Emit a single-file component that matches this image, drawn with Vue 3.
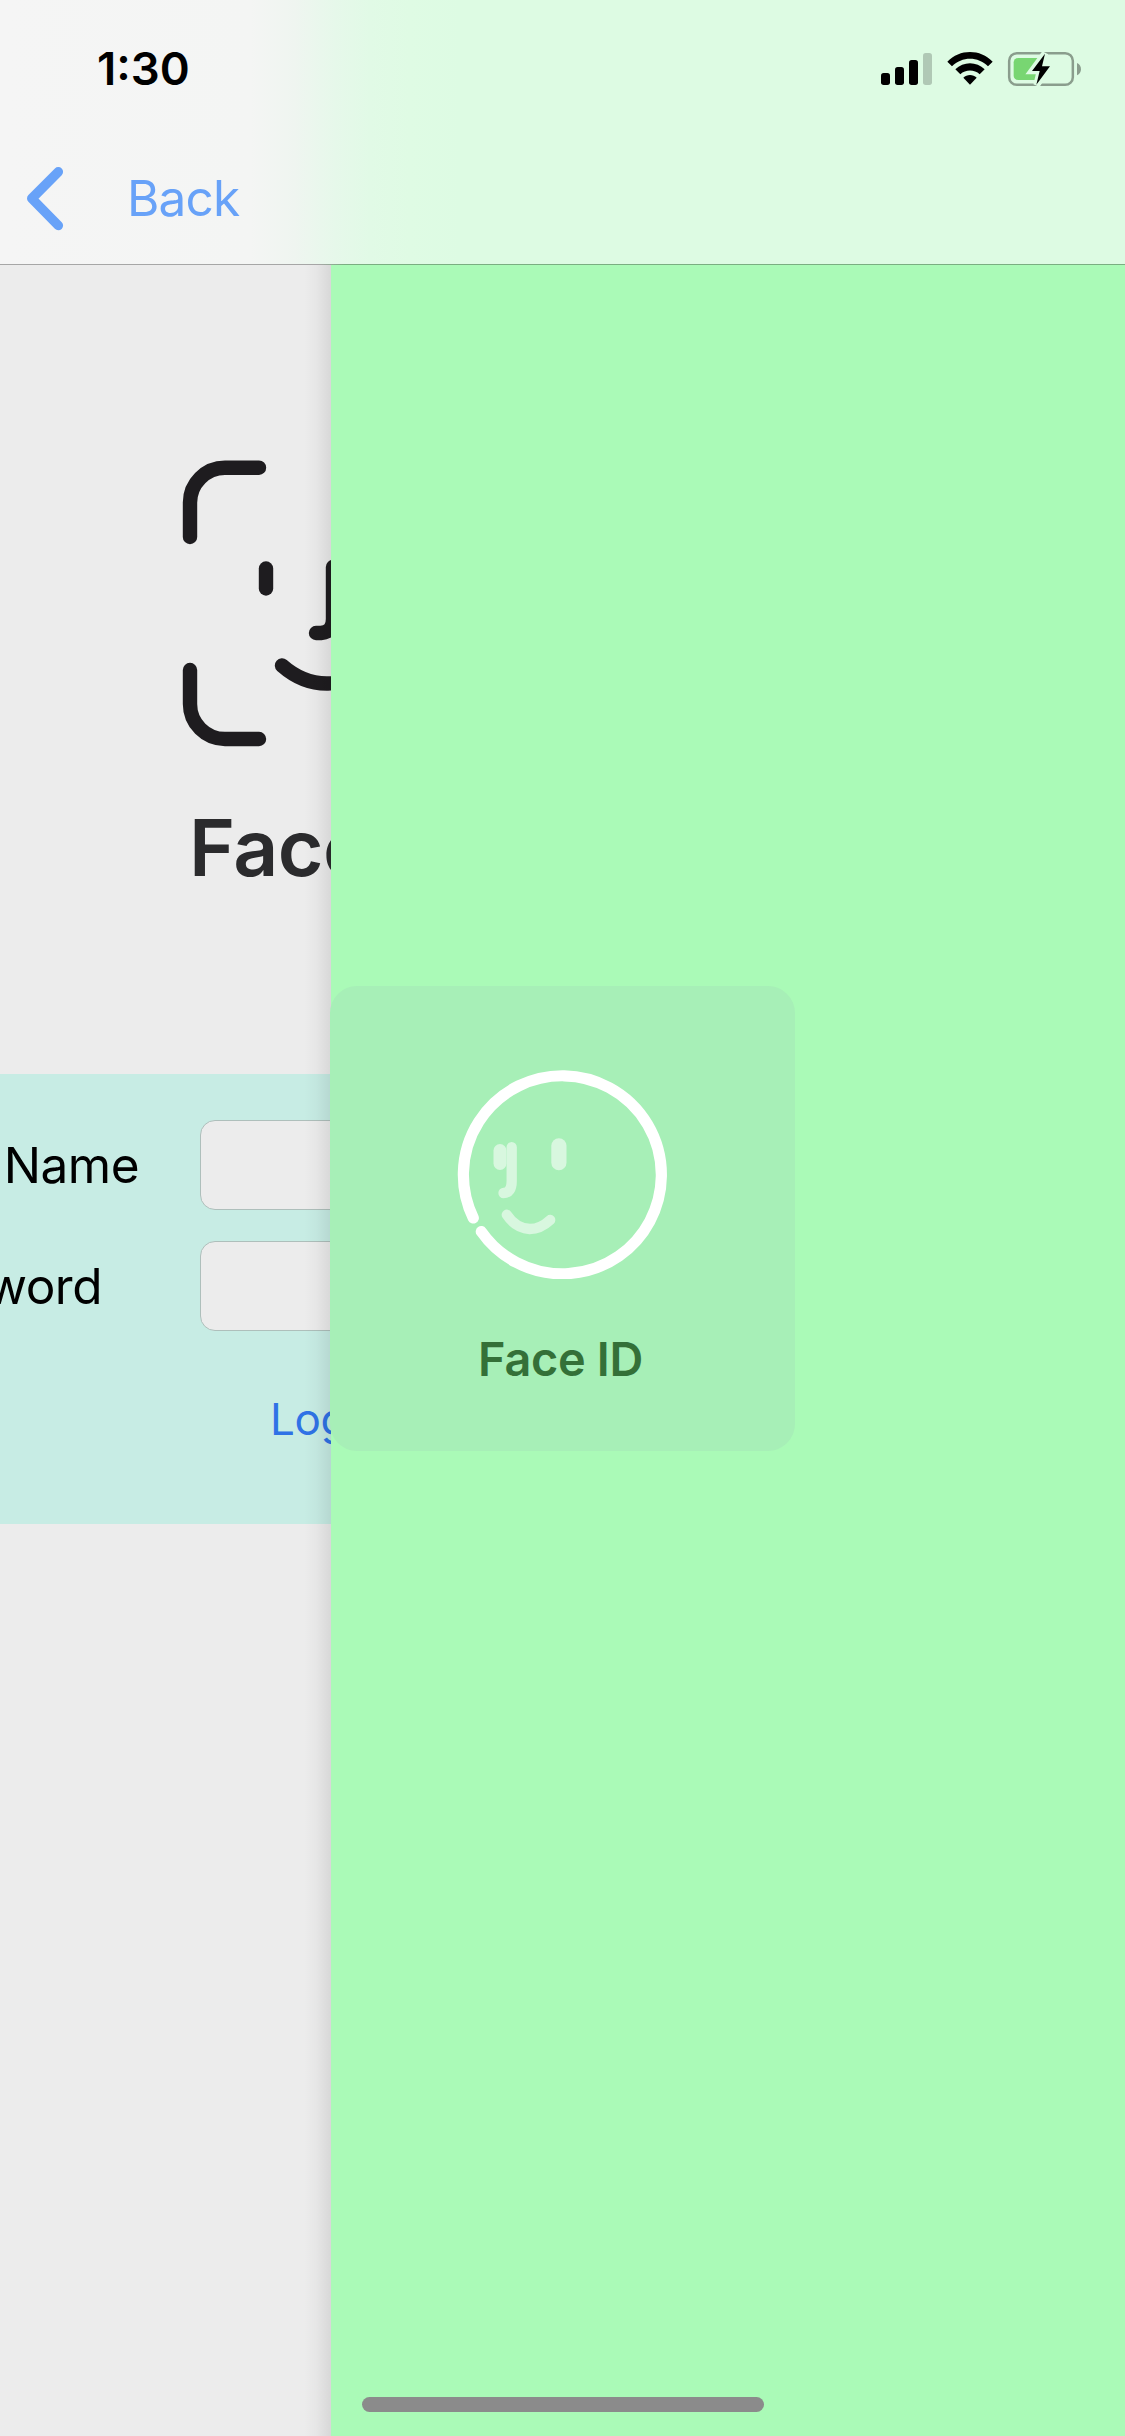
<script setup>
const fields = [
  { label: 'User Name', inset: 61 },
  { label: 'Password', inset: 98 },
]
</script>

<template>
  <div class="screen">
    <header class="nav">
      <div class="status">
        <span class="time">1:30</span>
        <svg class="indicators" viewBox="0 0 720 240" width="240" height="80">
          <rect x="63" y="129" width="27" height="36" rx="8" />
          <rect x="105" y="111" width="27" height="54" rx="8" />
          <rect x="147" y="90" width="27" height="75" rx="8" />
          <rect x="189" y="69" width="27" height="96" rx="8" opacity=".2" />
          <path d="M262 95C299 56 361 56 398 95L384 109C354 79 306 79 276 109Z" />
          <path d="M286 118C310 94 350 94 374 118L359 133C343 118 317 118 301 133Z" />
          <path d="M310 143C321 132 339 132 350 143L330 164Z" />
          <rect x="447.500" y="69.500" width="191" height="95" rx="23" fill="none" stroke="#8a9d8d" stroke-width="7.500" />
          <path d="M651 99C667 105 667 130 651 136Z" fill="#8a9d8d" />
          <rect x="461" y="84" width="84" height="66" rx="13" fill="#78d672" />
          <path d="M555 70L516 123H540L530 165L570 109H545Z" fill="#ddfbe3" stroke="#ddfbe3" stroke-width="20" />
          <path d="M555 71L516 123H539L529 164L570 109H546Z" />
        </svg>
      </div>
      <div class="back">
        <svg viewBox="0 0 40 66" width="40" height="66">
          <path d="M33.300 6.800L6.800 33.500L33.300 60.500" fill="none" stroke="#68a2f8" stroke-width="9.600" stroke-linecap="round" stroke-linejoin="round" />
        </svg>
        <span class="back-label">Back</span>
      </div>
    </header>

    <main class="content">
      <section class="login">
        <div class="hero">
          <svg class="face" viewBox="0 0 171 320" width="171" height="320" fill="none" stroke="#1e1c1f" stroke-width="14.4" stroke-linecap="round" stroke-linejoin="round">
            <path d="M30 97V63A35 35 0 0 1 65 27.700H99" />
            <path d="M30 230V264A35 35 0 0 0 65 299H99" />
            <path d="M106 128.5V148.5" />
            <path d="M173 127V179Q173 192 161 193H156" />
            <path d="M122 225.5Q143 244 168 243.5Q193 243 212 225.5" />
          </svg>
          <div class="title">Face ID</div>
        </div>
        <div class="form">
          <div v-for="f in fields" :key="f.label" class="row">
            <label class="label" :style="{ paddingRight: f.inset + 'px' }">{{ f.label }}</label>
            <div class="input"></div>
          </div>
          <div class="submit">Login</div>
        </div>
        <div class="edge"></div>
      </section>
      <section class="next"></section>
    </main>

    <div class="hud">
      <svg viewBox="0 0 210 210" width="210" height="210" fill="none" stroke-linecap="round">
        <path d="M16.3 149A99 99 0 1 1 24.3 162.6" stroke="#fff" stroke-width="11.2" />
        <g stroke="#d8f7df" stroke-width="10.3">
          <path d="M43 81.5V94.5" stroke-width="13" />
          <path d="M54.700 78.2V112Q54.700 124 46.500 124" />
          <path d="M101.900 76.8V93.7" stroke-width="15.2" />
          <path d="M49.800 145.7Q58.500 159 72.800 160Q83.500 160 93.200 151" />
        </g>
      </svg>
      <div class="hud-label">Face ID</div>
    </div>
    <div class="home"></div>
  </div>
</template>

<style>
body {
  margin: 0;
}
</style>

<style scoped>
.screen {
  position: relative;
  display: flex;
  flex-direction: column;
  width: 1125px;
  height: 2436px;
  overflow: hidden;
  font-family: Inter, 'Liberation Sans', sans-serif;
  background: #ececec;
}
.nav {
  box-sizing: border-box;
  height: 265px;
  flex: none;
  border-bottom: 1px solid #a6a6a6;
  border-image: linear-gradient(90deg, #a6a6a6 320px, #7aae81 345px) 1;
  background: linear-gradient(90deg, #f5f5f5 0, #f4f5f4 250px, #eff5f0 295px, #e6f8ea 335px, #e1fae6 370px, #dffbe4 410px, #ddfbe3 460px);
}
.status {
  display: flex;
  justify-content: space-between;
  padding: 30px 25px 0 97px;
  height: 80px;
}
.time {
  padding-top: 12px;
  font-size: 45.5px;
  line-height: 54px;
  font-weight: 600;
  letter-spacing: 0;
  color: #000;
}
.indicators {
  display: block;
}
.back {
  display: flex;
  align-items: center;
  margin-top: 55px;
  padding-left: 25px;
  height: 66px;
}
.back-label {
  margin-left: 62px;
  font-size: 49.5px;
  letter-spacing: -0.8px;
  color: #68a2f8;
}
.content {
  display: flex;
  flex: 1;
}
.login {
  position: relative;
  width: 331px;
  overflow: hidden;
}
.hero {
  height: 809px;
  padding: 175px 0 0 160px;
  box-sizing: border-box;
  white-space: nowrap;
}
.face {
  display: block;
}
.title {
  margin: 40px 0 0 29px;
  font-size: 78.5px;
  line-height: 95px;
  font-weight: 600;
  letter-spacing: -0.5px;
  color: #2b2b2d;
}
.form {
  box-sizing: border-box;
  height: 450px;
  padding-top: 46px;
  background: #c7ece4;
  white-space: nowrap;
}
.row {
  display: flex;
  height: 90px;
  margin-bottom: 31px;
}
.label {
  box-sizing: border-box;
  display: flex;
  justify-content: flex-end;
  flex: none;
  width: 200px;
  font-size: 49.5px;
  line-height: 90px;
  letter-spacing: -0.5px;
  color: #000;
}
.input {
  box-sizing: border-box;
  flex: none;
  width: 480px;
  border: 1px solid #aebfbb;
  border-radius: 15px;
  background: #ececec;
}
.submit {
  margin: 61px 0 0 270px;
  font-size: 44px;
  line-height: 54px;
  letter-spacing: -0.4px;
  color: #2f72e6;
}
.edge {
  position: absolute;
  inset: 0 0 0 auto;
  width: 27px;
  background: linear-gradient(90deg, transparent, rgba(0, 0, 0, 0.025) 45%, rgba(0, 0, 0, 0.085));
}
.next {
  flex: 1;
  background: #aafab7;
}
.hud {
  position: absolute;
  left: 330px;
  top: 986px;
  box-sizing: border-box;
  width: 465px;
  height: 465px;
  padding: 83px 0 0;
  display: flex;
  flex-direction: column;
  align-items: center;
  border-radius: 27px;
  background: #a7efb7;
}
.hud > svg {
  margin-left: -1px;
}
.hud-label {
  margin: 52px 4px 0 0;
  font-size: 46.8px;
  line-height: 56px;
  font-weight: 600;
  letter-spacing: -0.3px;
  color: #347038;
}
.home {
  position: absolute;
  left: 362px;
  bottom: 24px;
  width: 402px;
  height: 15px;
  border-radius: 8px;
  background: #8b8b8b;
}
</style>
